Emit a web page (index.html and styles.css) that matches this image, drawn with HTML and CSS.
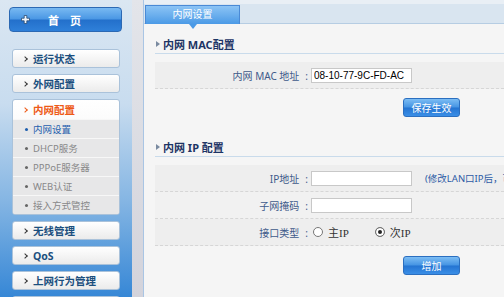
FILE: index.html
```html
<!DOCTYPE html>
<html lang="zh-CN">
<head>
  <meta charset="UTF-8">
  <meta name="viewport" content="width=device-width, initial-scale=1">
  <title>内网配置</title>
  <link rel="stylesheet" href="styles.css">
</head>
<body>

  <div class="page">
    <aside class="sidebar">
      <a class="home" href="#">
        <svg class="home-icon" width="9" height="9" viewBox="0 0 9 9">
          <path d="M3.2 0.5h2.6v2.7h2.7v2.6H5.8v2.7H3.2V5.8H0.5V3.2h2.7z" fill="#eef3f9" stroke="#274a73" stroke-width="0.8"/>
        </svg>
        <span>首　页</span>
      </a>

      <ul class="menu">
        <li class="item"><a class="item-head" href="#"><i class="chev"></i>运行状态</a></li>
        <li class="item"><a class="item-head" href="#"><i class="chev"></i>外网配置</a></li>
        <li class="item open">
          <a class="item-head" href="#"><i class="chev"></i>内网配置</a>
          <ul class="sub">
            <li class="active"><i class="dot"></i>内网设置</li>
            <li><i class="dot"></i>DHCP服务</li>
            <li><i class="dot"></i>PPPoE服务器</li>
            <li><i class="dot"></i>WEB认证</li>
            <li><i class="dot"></i>接入方式管控</li>
          </ul>
        </li>
        <li class="item"><a class="item-head" href="#"><i class="chev"></i>无线管理</a></li>
        <li class="item"><a class="item-head" href="#"><i class="chev"></i>QoS</a></li>
        <li class="item"><a class="item-head" href="#"><i class="chev"></i>上网行为管理</a></li>
        <li class="item"><a class="item-head" href="#"></a></li>
      </ul>
    </aside>

    <div class="split"></div>

    <main class="main">
      <div class="tabbar">
        <span class="tab">内网设置</span>
      </div>

      <div class="content">
        <h2 class="section-title">内网 MAC配置</h2>
        <div class="row">
          <label class="field-label">内网 MAC 地址</label>
          <input class="field" type="text" value="08-10-77-9C-FD-AC">
        </div>
        <div class="actions"><button type="button">保存生效</button></div>

        <h2 class="section-title second">内网 IP 配置</h2>
        <div class="row">
          <label class="field-label">IP地址</label>
          <input class="field" type="text">
          <span class="note">(修改LAN口IP后，可</span>
        </div>
        <div class="row even">
          <label class="field-label">子网掩码</label>
          <input class="field" type="text">
        </div>
        <div class="row">
          <label class="field-label">接口类型</label>
          <label class="radio"><input type="radio" name="iptype">主IP</label>
          <label class="radio"><input type="radio" name="iptype" checked>次IP</label>
        </div>
        <div class="actions low"><button type="button">增加</button></div>
      </div>
    </main>
  </div>

</body>
</html>
```

FILE: styles.css
```css
body {
  margin: 0;
  font-family: "Noto Sans", "Noto Sans CJK SC", sans-serif;
  overflow: hidden;
}

ul {
  list-style: none;
  margin: 0;
  padding: 0;
}

a {
  text-decoration: none;
}

.page {
  display: flex;
  width: 504px;
  height: 297px;
  overflow: hidden;
}

/* barre de gauche */
.sidebar {
  width: 132px;
  flex: none;
  padding-top: 7px;
  box-sizing: border-box;
  background: linear-gradient(#dbe7f2, #c8dcef 35%, #84b5e3 68%, #3687d6);
}

.home {
  display: flex;
  align-items: center;
  margin-left: 9px;
  width: 113px;
  height: 25px;
  box-sizing: border-box;
  padding-left: 11px;
  border: 1px solid #2c69b3;
  border-radius: 4px;
  background: linear-gradient(#78b9f2, #4a97e4 48%, #2370cb 52%, #2f80d9);
  color: #fff;
  font-size: 11px;
  font-weight: bold;
}

.home-icon {
  margin-right: 18px;
}

.menu {
  margin: 17px 0 0 12px;
  width: 108px;
  display: flex;
  flex-direction: column;
  gap: 6px;
}

.item {
  border: 1px solid #aac2da;
  border-radius: 3px;
  background: linear-gradient(#ffffff, #ebebeb);
  overflow: hidden;
}

.item-head {
  display: flex;
  align-items: center;
  height: 17px;
  padding-left: 10px;
  font-size: 10.5px;
  font-weight: bold;
  color: #1b4f7e;
}

.chev {
  width: 3px;
  height: 3px;
  border-top: 1.3px solid #333;
  border-right: 1.3px solid #333;
  transform: rotate(45deg);
  margin-right: 6px;
}

.open .item-head {
  height: 19px;
  color: #ee5a16;
}

.open .chev {
  border-color: #ee5a16;
}

.sub {
  background: #e7e7e8;
}

.sub li {
  display: flex;
  align-items: center;
  height: 18px;
  padding-left: 12px;
  border-top: 1px solid #f7f7f7;
  font-size: 9.5px;
  color: #888;
}

.sub li.active {
  color: #1f5fae;
}

.dot {
  width: 3px;
  height: 3px;
  border-radius: 50%;
  background: #666;
  margin-right: 5px;
}

.sub li.active .dot {
  background: #1f5fae;
}

.split {
  width: 11px;
  flex: none;
  background: linear-gradient(#e3e5ea, #d3d3db);
}

/* partie principale */
.main {
  flex: 1;
  min-width: 0;
  border-left: 1px solid #a9c5e4;
  background: #f5f5f5;
}

.tabbar {
  height: 24px;
  box-sizing: border-box;
  padding: 5px 0 0 1px;
  border-bottom: 1px solid #b6cde3;
  background: linear-gradient(#e9eff5 0, #e9eff5 4px, #d9e5f0 4px);
}

.tab {
  position: relative;
  display: block;
  width: 95px;
  height: 19px;
  box-sizing: border-box;
  border: 1px solid #4a8ad6;
  border-bottom: none;
  background: linear-gradient(#8cc4f5, #4b9ae6);
  color: #fff;
  font-size: 10px;
  line-height: 17px;
  text-align: center;
}

.tab::after {
  content: "";
  position: absolute;
  left: 50%;
  bottom: -5px;
  margin-left: -4px;
  border-top: 5px solid #4b9ae6;
  border-left: 4px solid transparent;
  border-right: 4px solid transparent;
}

.content {
  padding-left: 11px;
}

.section-title {
  display: flex;
  align-items: center;
  margin: 11px 0 0;
  height: 18px;
  border-bottom: 1px solid #c9dbeb;
  font-size: 11px;
  color: #1d3465;
}

.section-title::before {
  content: "";
  margin: 0 3px 0 1px;
  border-left: 4px solid #7a8aa0;
  border-top: 3px solid transparent;
  border-bottom: 3px solid transparent;
}

.section-title.second {
  margin-top: 21px;
}

.section-title + .row {
  margin-top: 8px;
}

.row {
  display: flex;
  align-items: center;
  height: 26px;
  border-bottom: 1px dashed #d6d6d6;
  background: #eeeeee;
  overflow: hidden;
}

.row.even {
  background: #f1f1f1;
}

.field-label {
  width: 156px;
  flex: none;
  box-sizing: border-box;
  padding-right: 3px;
  text-align: right;
  font-size: 10px;
  color: #3e5a8a;
}

.field-label::after {
  content: ":";
  margin-left: 6px;
}

.field {
  width: 101px;
  flex: none;
  height: 15px;
  box-sizing: border-box;
  padding: 0 2px;
  border: 1px solid #c8c8c8;
  background: #fff;
  font-family: "Liberation Sans", Arial, sans-serif;
  font-size: 10px;
  color: #000;
}

.note {
  margin-left: 13px;
  white-space: nowrap;
  font-size: 9.5px;
  color: #2d5aa5;
}

.radio {
  display: flex;
  align-items: center;
  margin-right: 24px;
  font-family: "Liberation Serif", "Noto Sans CJK SC", serif;
  font-size: 11px;
  color: #333;
}

.radio input {
  appearance: none;
  width: 10px;
  height: 10px;
  margin: 0 5px 0 2px;
  border: 1px solid #777;
  border-radius: 50%;
  background: #fff;
}

.radio input:checked {
  background: #222;
  box-shadow: inset 0 0 0 2px #fff;
}

.actions {
  margin-top: 9px;
  padding-left: 248px;
}

.actions.low {
  margin-top: 10px;
}

.actions button {
  display: block;
  width: 57px;
  height: 19px;
  padding: 0;
  border: 1px solid #2b6fc0;
  border-radius: 3px;
  background: linear-gradient(#7cbdf4, #4594e3 48%, #2474d2 52%, #3a8ee6);
  color: #fff;
  font-family: "Noto Sans CJK SC", sans-serif;
  font-size: 10px;
  cursor: pointer;
}
```
